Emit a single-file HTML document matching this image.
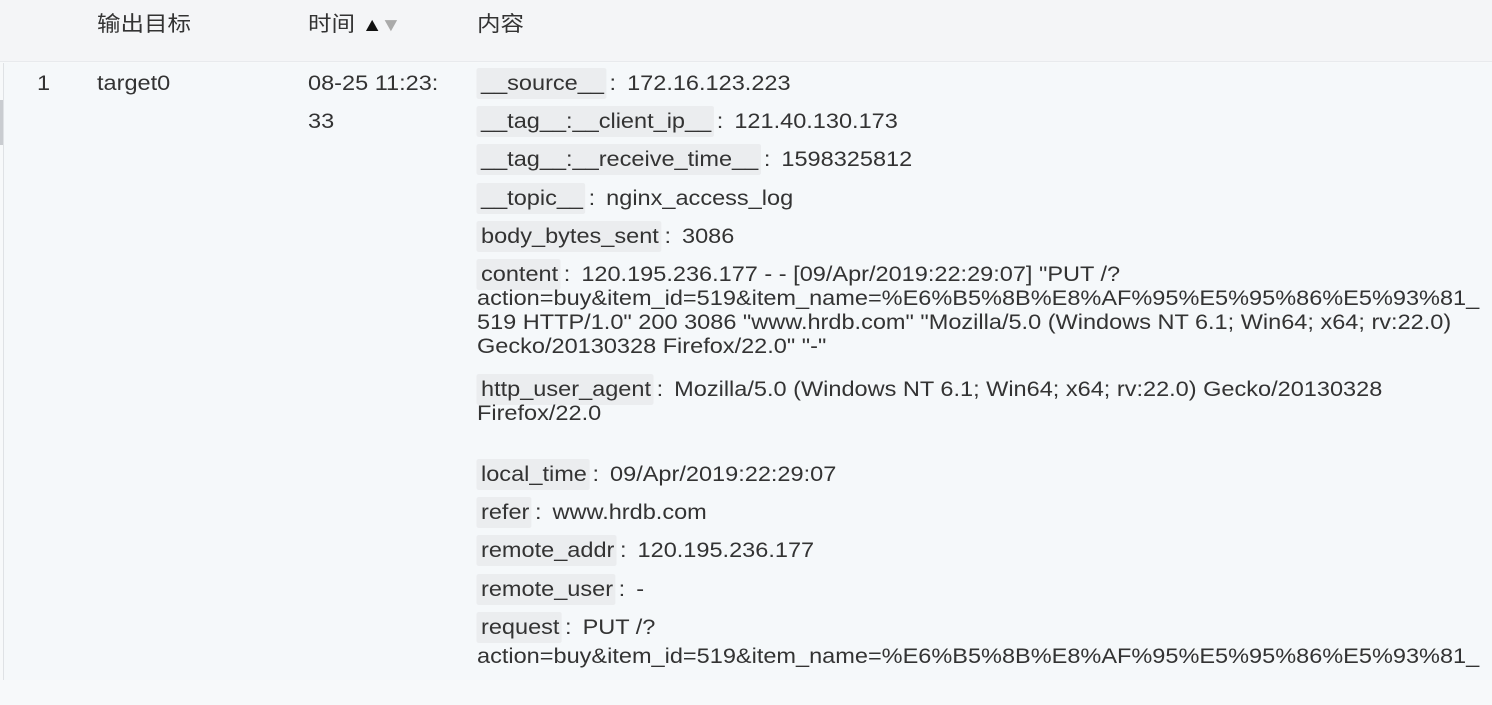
<!DOCTYPE html>
<html><head><meta charset="utf-8"><style>
*{margin:0;padding:0;box-sizing:border-box}
body{width:1492px;height:705px;overflow:hidden;background:#f7f9fa;font-family:"Liberation Sans","Noto Sans CJK SC",sans-serif;color:#333;font-size:21px;position:relative}
.hdr{position:absolute;left:0;top:0;width:1492px;height:62px;background:#f4f5f7;border-bottom:1px solid #e8eaed}
.row{position:absolute;left:3px;top:63px;width:1489px;height:617px;background:#f5f8fa;border-left:1px solid #dfe2e5}
.bar{position:absolute;left:0;top:100px;width:3px;height:45px;background:#c9ccd0}
.t{position:absolute;white-space:nowrap;line-height:24px;transform:scaleX(1.12);transform-origin:0 0}
.c{background:#ebedef;padding:4px 2px 4px 4px;border-radius:2px;margin-left:-4px}
.s{margin-left:3px;margin-right:4px}
</style></head><body>
<div class="hdr"></div>
<div class="row"></div>
<div class="bar"></div>
<div class="t" style="left:97px;top:13px">输出目标</div>
<div class="t" style="left:308px;top:13px">时间 <span style="font-size:19px;color:#111">▲</span><span style="font-size:19px;color:#aaa;margin-left:-2px">▼</span></div>
<div class="t" style="left:477px;top:13px">内容</div>

<div class="t" style="left:37px;top:72px">1</div>
<div class="t" style="left:97px;top:72px">target0</div>
<div class="t" style="left:308px;top:72px">08-25 11:23:</div>
<div class="t" style="left:308px;top:110px">33</div>

<div class="t" style="left:481px;top:72px"><span class="c">__source__</span><span class="s">:</span> 172.16.123.223</div>
<div class="t" style="left:481px;top:110px"><span class="c">__tag__:__client_ip__</span><span class="s">:</span> 121.40.130.173</div>
<div class="t" style="left:481px;top:148px"><span class="c">__tag__:__receive_time__</span><span class="s">:</span> 1598325812</div>
<div class="t" style="left:481px;top:187px"><span class="c">__topic__</span><span class="s">:</span> nginx_access_log</div>
<div class="t" style="left:481px;top:225px"><span class="c">body_bytes_sent</span><span class="s">:</span> 3086</div>
<div class="t" style="left:481px;top:263px"><span class="c">content</span><span class="s">:</span> 120.195.236.177 - - [09/Apr/2019:22:29:07] "PUT /?</div>
<div class="t" style="left:477px;top:287px">action=buy&amp;item_id=519&amp;item_name=%E6%B5%8B%E8%AF%95%E5%95%86%E5%93%81_</div>
<div class="t" style="left:477px;top:311px">519 HTTP/1.0" 200 3086 "www.hrdb.com" "Mozilla/5.0 (Windows NT 6.1; Win64; x64; rv:22.0)</div>
<div class="t" style="left:477px;top:335px">Gecko/20130328 Firefox/22.0" "-"</div>
<div class="t" style="left:481px;top:378px"><span class="c">http_user_agent</span><span class="s">:</span> Mozilla/5.0 (Windows NT 6.1; Win64; x64; rv:22.0) Gecko/20130328</div>
<div class="t" style="left:477px;top:402px">Firefox/22.0</div>
<div class="t" style="left:481px;top:463px"><span class="c">local_time</span><span class="s">:</span> 09/Apr/2019:22:29:07</div>
<div class="t" style="left:481px;top:501px"><span class="c">refer</span><span class="s">:</span> www.hrdb.com</div>
<div class="t" style="left:481px;top:539px"><span class="c">remote_addr</span><span class="s">:</span> 120.195.236.177</div>
<div class="t" style="left:481px;top:578px"><span class="c">remote_user</span><span class="s">:</span> -</div>
<div class="t" style="left:481px;top:616px"><span class="c">request</span><span class="s">:</span> PUT /?</div>
<div class="t" style="left:477px;top:645px">action=buy&amp;item_id=519&amp;item_name=%E6%B5%8B%E8%AF%95%E5%95%86%E5%93%81_</div>
</body></html>
